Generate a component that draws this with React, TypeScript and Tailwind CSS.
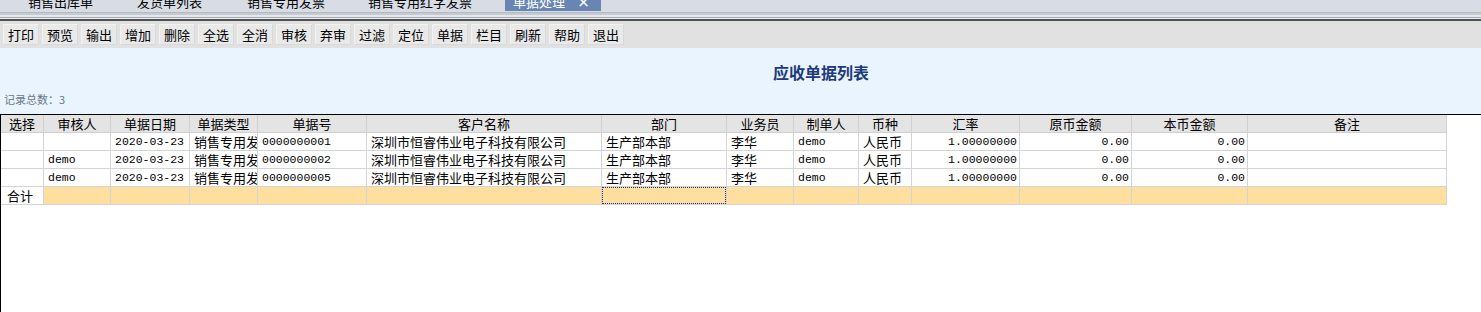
import React from "react";

const cols = [
  { key: "sel", title: "选择", w: 43 },
  { key: "aud", title: "审核人", w: 67 },
  { key: "date", title: "单据日期", w: 79 },
  { key: "type", title: "单据类型", w: 68 },
  { key: "no", title: "单据号", w: 109 },
  { key: "cust", title: "客户名称", w: 235 },
  { key: "dept", title: "部门", w: 125 },
  { key: "sales", title: "业务员", w: 67 },
  { key: "maker", title: "制单人", w: 65 },
  { key: "cur", title: "币种", w: 53 },
  { key: "rate", title: "汇率", w: 108 },
  { key: "orig", title: "原币金额", w: 112 },
  { key: "local", title: "本币金额", w: 116 },
  { key: "memo", title: "备注", w: 199 },
];

type Row = Record<string, string>;
const rows: Row[] = [
  { sel: "", aud: "", date: "2020-03-23", type: "销售专用发", no: "0000000001", cust: "深圳市恒睿伟业电子科技有限公司", dept: "生产部本部", sales: "李华", maker: "demo", cur: "人民币", rate: "1.00000000", orig: "0.00", local: "0.00", memo: "" },
  { sel: "", aud: "demo", date: "2020-03-23", type: "销售专用发", no: "0000000002", cust: "深圳市恒睿伟业电子科技有限公司", dept: "生产部本部", sales: "李华", maker: "demo", cur: "人民币", rate: "1.00000000", orig: "0.00", local: "0.00", memo: "" },
  { sel: "", aud: "demo", date: "2020-03-23", type: "销售专用发", no: "0000000005", cust: "深圳市恒睿伟业电子科技有限公司", dept: "生产部本部", sales: "李华", maker: "demo", cur: "人民币", rate: "1.00000000", orig: "0.00", local: "0.00", memo: "" },
];

const mono = new Set(["aud", "date", "no", "maker", "rate", "orig", "local"]);
const right = new Set(["rate", "orig", "local"]);

const tools = ["打印", "预览", "输出", "增加", "删除", "全选", "全消", "审核", "弃审", "过滤", "定位", "单据", "栏目", "刷新", "帮助", "退出"];

export default function App() {
  return (
    <div className="w-[1481px] h-[312px] overflow-hidden bg-white font-['Noto_Sans_CJK_SC',sans-serif] text-black">
      {/* tab bar */}
      <div className="h-[12px] bg-[#d7dce5] overflow-hidden">
        <div className="flex h-[20px] -mt-[9px] items-center text-[13px] leading-none">
          <div className="w-[28px]" />
          <div className="w-[109px]">销售出库单</div>
          <div className="w-[110px]">发货单列表</div>
          <div className="w-[121px]">销售专用发票</div>
          <div className="w-[137px]">销售专用红字发票</div>
          <div className="w-[96px] h-full bg-[#6886b2] text-white flex items-center pl-[8px]">
            <span>单据处理</span>
            <span className="ml-[12px] font-bold">×</span>
          </div>
        </div>
      </div>
      {/* separator */}
      <div className="h-[1px] bg-[#b4bac2]" />
      <div className="h-[2px] bg-[#c6cbd2]" />
      <div className="h-[2px] bg-[#e4e7eb]" />
      <div className="h-[1px] bg-[#a3a9b0]" />
      <div className="h-[1px] bg-[#eeeeee]" />
      <div className="h-[2px] bg-[#505050]" />
      {/* toolbar */}
      <div className="h-[27px] bg-[#e1e1e1] flex items-center pl-[3px] gap-[3px]">
        {tools.map((t) => (
          <div
            key={t}
            className="w-[36px] h-[21px] flex items-center justify-center text-[13px] leading-none bg-[#e9e9e9] border border-t-[#f2f2f2] border-l-[#f2f2f2] border-r-[#d9d9d9] border-b-[#d9d9d9] rounded-[2px]"
          >
            {t}
          </div>
        ))}
      </div>
      {/* header area */}
      <div className="h-[66px] bg-[#eaf4fe] flex flex-col">
        <div className="h-[46px] flex items-center pl-[773px] pt-[2px]">
          <span className="text-[16px] font-bold text-[#1c3a7c] leading-none">应收单据列表</span>
        </div>
        <div className="pl-[4px] text-[11px] text-[#6a7985] leading-none">记录总数：3</div>
      </div>
      {/* grid */}
      <div className="h-[1px] bg-black" />
      <div className="flex">
        <div className="w-[1px] h-[200px] bg-black" />
        <div className="flex flex-col">
          <div className="flex h-[18px] bg-[#e4e4e4] border-b border-[#d0d0d0]">
            {cols.map((c) => (
              <div
                key={c.key}
                style={{ width: c.w }}
                className="shrink-0 h-full border-r border-[#d0d0d0] flex items-center justify-center text-[13px] leading-none"
              >
                {c.title}
              </div>
            ))}
          </div>
          {rows.map((r, i) => (
            <div key={i} className="flex h-[18px] bg-white border-b border-[#d4d4d4]">
              {cols.map((c) => (
                <div
                  key={c.key}
                  style={{ width: c.w }}
                  className={
                    "shrink-0 h-full border-r border-[#d4d4d4] flex items-center overflow-hidden whitespace-nowrap leading-none " +
                    (right.has(c.key) ? "justify-end pr-[2px] " : "pl-[4px] ") +
                    (mono.has(c.key)
                      ? "font-['Liberation_Mono',monospace] text-[11.5px]"
                      : "text-[13px]")
                  }
                >
                  {r[c.key]}
                </div>
              ))}
            </div>
          ))}
          <div className="flex h-[18px] border-b border-[#d4d4d4]">
            {cols.map((c, idx) => (
              <div
                key={c.key}
                style={{ width: c.w }}
                className={
                  "shrink-0 h-full border-r border-[#d4d4d4] flex items-center text-[13px] leading-none " +
                  (idx === 0 ? "bg-white pl-[6px]" : "bg-[#ffdf9f]")
                }
              >
                {idx === 0 ? (
                  "合计"
                ) : c.key === "dept" ? (
                  <div className="w-full h-full border border-dotted border-[#1a2f8c]" />
                ) : null}
              </div>
            ))}
          </div>
        </div>
      </div>
    </div>
  );
}
